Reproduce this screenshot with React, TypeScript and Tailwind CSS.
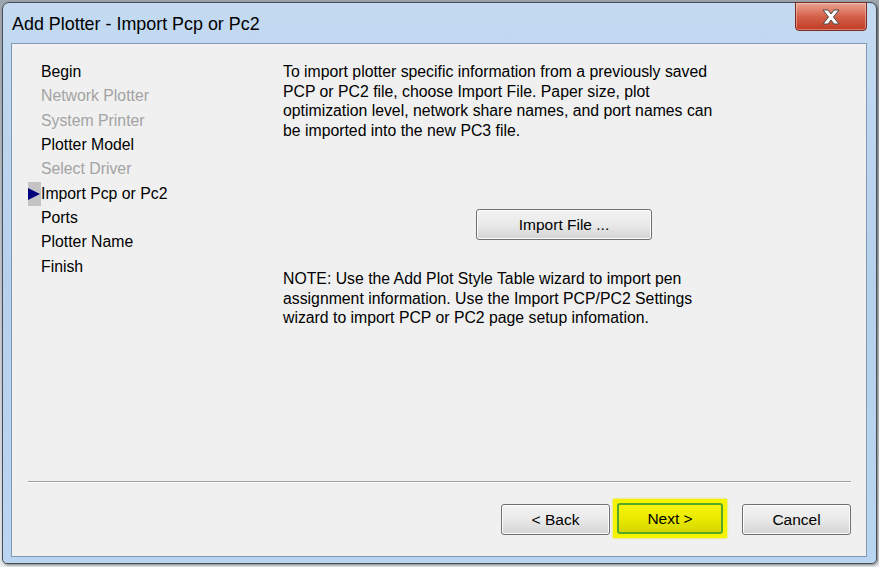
import React from "react"

const steps = [
  { label: "Begin", enabled: true },
  { label: "Network Plotter", enabled: false },
  { label: "System Printer", enabled: false },
  { label: "Plotter Model", enabled: true },
  { label: "Select Driver", enabled: false },
  { label: "Import Pcp or Pc2", enabled: true, current: true },
  { label: "Ports", enabled: true },
  { label: "Plotter Name", enabled: true },
  { label: "Finish", enabled: true },
]

const btn =
  "h-[31px] rounded-[3px] border border-[#707070] bg-gradient-to-b from-[#f3f3f3] via-[#e9e9e9] to-[#d4d4d4] text-[15.5px] text-black shadow-[inset_0_0_0_1px_#fcfcfc]"

export default function App() {
  return (
    <div
      className="w-[879px] h-[567px] overflow-hidden bg-gradient-to-b from-[#9fa7b0] to-[#e9ecef]"
      style={{ fontFamily: '"Liberation Sans", Arial, sans-serif' }}
    >
      <div className="ml-[2px] mt-[2px] w-[875px] h-[562px] flex flex-col rounded-t-[7px] rounded-b-[5px] border border-[#4b4f55] bg-gradient-to-b from-[#c3daf1] via-[#b6d1ee] to-[#b9d5f2] shadow-[1px_1px_3px_rgba(0,0,0,0.5)]">
        {/* Title bar */}
        <div className="h-[40px] flex items-start shrink-0">
          <div className="pl-[9px] pt-[10px] text-[17.9px] leading-[22px] text-black">
            Add Plotter - Import Pcp or Pc2
          </div>
          <div className="ml-auto mr-[9px] -mt-[1px] w-[72px] h-[29px] flex items-center justify-center rounded-b-[4px] border border-[#7a2c20] bg-gradient-to-b from-[#e8a291] via-[#d5604a] to-[#c03a22] shadow-[inset_0_0_0_1px_rgba(255,255,255,0.35)]">
            <svg width="22" height="18" viewBox="0 0 22 18">
              <path
                d="M3 2 L8 2 L11 6 L14 2 L19 2 L13.5 9 L19 16 L14 16 L11 12 L8 16 L3 16 L8.5 9 Z"
                fill="#ffffff"
                stroke="#4a4a4a"
                strokeWidth="1"
                strokeLinejoin="round"
              />
            </svg>
          </div>
        </div>

        {/* Client area */}
        <div className="flex-1 ml-[8px] mr-[9px] mb-[6px] border border-[#8197b3] bg-[#f0f0f0] flex flex-col">
          <div className="flex flex-1">
            {/* Steps */}
            <div className="w-[255px] pt-[16px] pl-[16px] flex flex-col">
              {steps.map((s) => (
                <div key={s.label} className="h-[24.3px] flex items-center">
                  <div className="w-[13px] h-[24px] flex items-center">
                    {s.current && (
                      <div className="w-[13px] h-[24px] bg-[#c4c4c4] flex items-center">
                        <svg width="12" height="12" viewBox="0 0 12 12">
                          <path d="M0 0 L12 6 L0 12 Z" fill="#00007f" />
                        </svg>
                      </div>
                    )}
                  </div>
                  <span className={`text-[15.8px] leading-[20px] ${s.enabled ? "text-black" : "text-[#a3a3a3]"}`}>
                    {s.label}
                  </span>
                </div>
              ))}
            </div>

            {/* Content */}
            <div className="flex-1 pl-[16px] pt-[18px] text-[15.8px] leading-[19.5px] text-black">
              <p>
                To import plotter specific information from a previously saved
                <br />
                PCP or PC2 file, choose Import File. Paper size, plot
                <br />
                optimization level, network share names, and port names can
                <br />
                be imported into the new PC3 file.
              </p>
              <div className="mt-[69px] pl-[193px]">
                <button className={`${btn} w-[176px]`}>Import File ...</button>
              </div>
              <p className="mt-[29px]">
                NOTE: Use the Add Plot Style Table wizard to import pen
                <br />
                assignment information. Use the Import PCP/PC2 Settings
                <br />
                wizard to import PCP or PC2 page setup infomation.
              </p>
            </div>
          </div>

          {/* Separator + buttons */}
          <div className="mx-[16px] mr-[15px] h-[2px] border-t border-[#a0a0a0] border-b-white border-b" />
          <div className="h-[73px] flex items-start justify-end pr-[15px] pt-[21px]">
            <button className={`${btn} w-[109px]`}>&lt; Back</button>
            <div className="ml-[3px] -mt-[5px] p-[4px] bg-[#f4f400] shadow-[0_0_2px_#e0e000]">
              <button className="h-[31px] w-[106px] rounded-[3px] border-2 border-[#58a828] bg-gradient-to-b from-[#f6f60c] via-[#eaea00] to-[#d6d600] text-[15.5px] text-black">
                Next &gt;
              </button>
            </div>
            <button className={`${btn} w-[109px] ml-[15px]`}>Cancel</button>
          </div>
        </div>
      </div>
    </div>
  )
}
